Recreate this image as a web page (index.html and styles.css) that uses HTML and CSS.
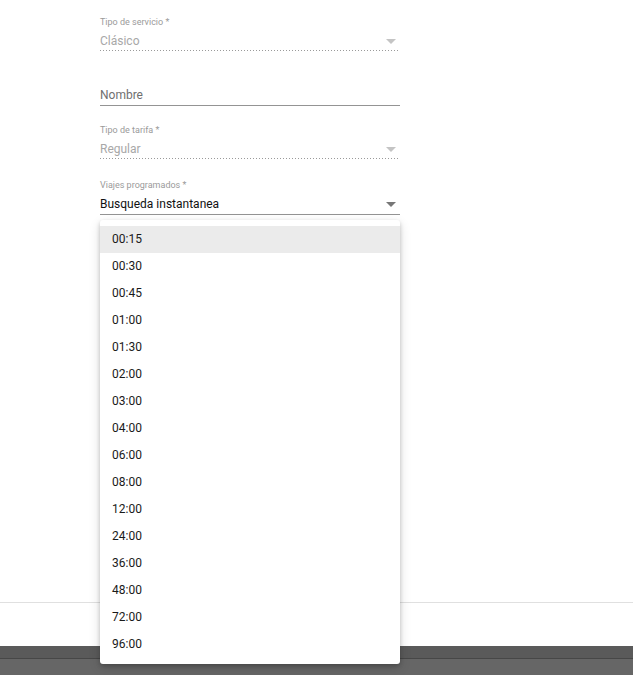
FILE: index.html
```html
<!DOCTYPE html>
<html lang="es">
<head>
<meta charset="utf-8">
<link rel="stylesheet" href="styles.css">
</head>
<body>
<div class="page">
  <section class="form">
    <div class="field">
      <div class="label">Tipo de servicio *</div>
      <div class="value disabled dotted"><span>Clásico</span><i class="arrow light"></i></div>
    </div>
    <div class="field">
      <div class="label"></div>
      <div class="value placeholder solid"><span>Nombre</span></div>
    </div>
    <div class="field">
      <div class="label">Tipo de tarifa *</div>
      <div class="value disabled dotted"><span>Regular</span><i class="arrow light"></i></div>
    </div>
    <div class="field f4">
      <div class="label">Viajes programados *</div>
      <div class="value active solid"><span>Busqueda instantanea</span><i class="arrow"></i></div>
    </div>
  </section>
  <div class="footer"></div>
  <div class="darkbar"><div class="darkline"></div></div>
  <ul class="menu">
    <li class="item hl">00:15</li>
    <li class="item">00:30</li>
    <li class="item">00:45</li>
    <li class="item">01:00</li>
    <li class="item">01:30</li>
    <li class="item">02:00</li>
    <li class="item">03:00</li>
    <li class="item">04:00</li>
    <li class="item">06:00</li>
    <li class="item">08:00</li>
    <li class="item">12:00</li>
    <li class="item">24:00</li>
    <li class="item">36:00</li>
    <li class="item">48:00</li>
    <li class="item">72:00</li>
    <li class="item">96:00</li>
  </ul>
</div>
</body>
</html>
```
FILE: styles.css
```css
html, body {
  margin: 0;
  padding: 0;
  background: #fff;
  font-family: Roboto, "Liberation Sans", sans-serif;
  font-size: 12px;
  overflow: hidden;
}
.page {
  position: relative;
  width: 633px;
  height: 675px;
}
.form {
  height: 586px;
  padding: 16px 0 0 100px;
  display: flex;
  flex-direction: column;
  gap: 18px;
}
.field {
  width: 300px;
}
.f4 { margin-top: 1px; }
.label {
  height: 12px;
  line-height: 12px;
  font-size: 9px;
  color: #9a9a9a;
}
.value {
  display: flex;
  align-items: center;
  justify-content: space-between;
  padding: 5px 0 2px;
  line-height: 16px;
  height: 16px;
}
.dotted {
  border-bottom: 1px solid transparent;
  background-image: linear-gradient(to right, #9a9a9a 34%, transparent 34%);
  background-size: 3px 1px;
  background-repeat: repeat-x;
  background-position: 0 100%;
}
.solid {
  border-bottom: 1px solid #949494;
}
.disabled { color: #a8a8a8; }
.placeholder { color: #6f6f6f; }
.active { color: #111; }
.arrow {
  width: 0;
  height: 0;
  border-left: 5px solid transparent;
  border-right: 5px solid transparent;
  border-top: 5px solid #777;
  margin-right: 4px;
}
.arrow.light { border-top-color: #c4c4c4; }
.footer {
  height: 43px;
  border-top: 1px solid #e0e0e0;
}
.darkbar {
  height: 29px;
  background: #666;
  border-top: 12px solid #5a5a5a;
  box-sizing: border-box;
}
.darkline {
  height: 1px;
  background: #474747;
}
.menu {
  position: absolute;
  top: 220px;
  left: 100px;
  width: 300px;
  margin: 0;
  padding: 6px 0;
  list-style: none;
  background: #fff;
  border-radius: 3px;
  box-shadow: 0 2px 4px rgba(0,0,0,0.2), 0 4px 12px rgba(0,0,0,0.14);
}
.item {
  height: 27px;
  line-height: 27px;
  padding-left: 12px;
  color: #1a1a1a;
}
.item.hl { background: #ebebeb; }
```
